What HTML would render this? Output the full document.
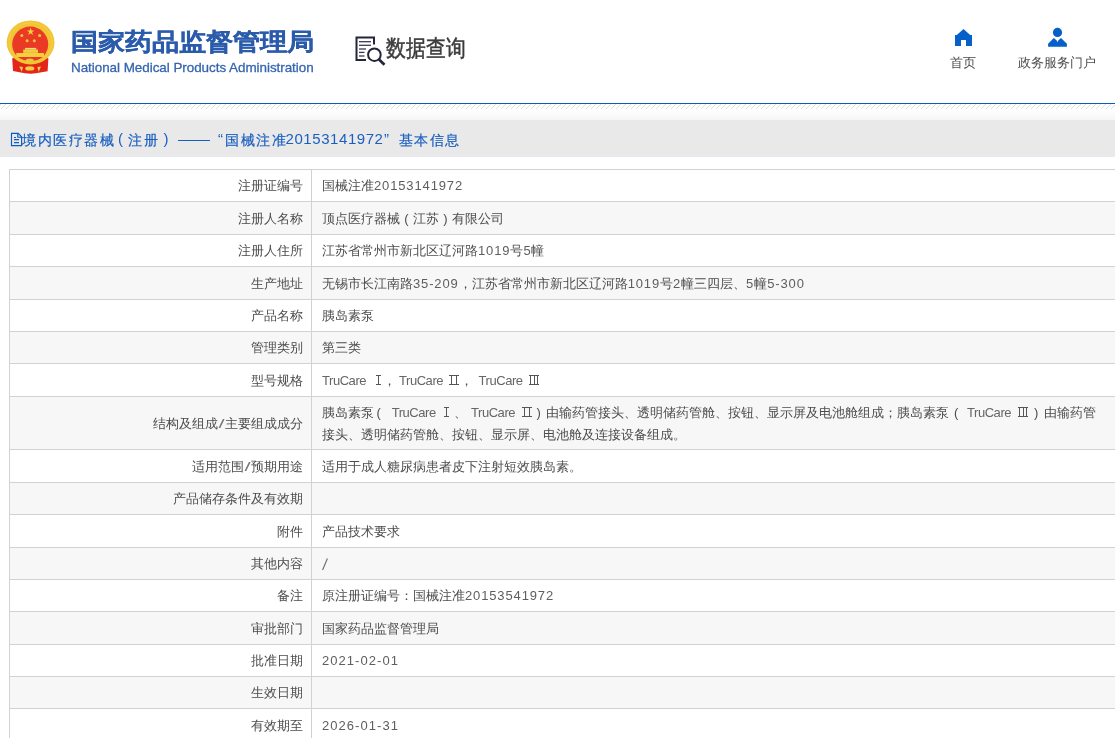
<!DOCTYPE html>
<html><head><meta charset="utf-8">
<style>
*{margin:0;padding:0;box-sizing:border-box}
html,body{width:1115px;height:738px;overflow:hidden;background:#fff}
body{font-family:"Liberation Sans",sans-serif;position:relative;color:#555;-webkit-font-smoothing:antialiased}
.abs{position:absolute;white-space:nowrap}
#hdr{position:absolute;left:0;top:0;width:1115px;height:103px;background:#fff}
#title{left:71px;top:22.8px;font-size:27px;font-weight:bold;color:#2b5bab;line-height:36px;transform:scaleY(0.885);transform-origin:0 30.5px;-webkit-text-stroke:0.35px #2b5bab}
#en{left:71px;top:60px;font-size:13.45px;color:#3565b0;line-height:16px;letter-spacing:-0.04px;-webkit-text-stroke:0.3px #3565b0}
#dq{left:386px;top:34px;font-size:20px;color:#3c3c3c;line-height:28px;transform:scaleY(1.16);transform-origin:0 14.5px;-webkit-text-stroke:0.45px #3c3c3c}
.nav{font-size:13px;color:#4c4c4c;line-height:16px}
#blue{position:absolute;left:0;top:103px;width:1115px;height:1px;background:#0a5cc2}
#hatch{position:absolute;left:0;top:104px;width:1115px;height:5px;
 }
#grad{position:absolute;left:0;top:109px;width:1115px;height:11px;background:linear-gradient(#fff,#f6f6f6)}
#band{position:absolute;left:0;top:120px;width:1115px;height:37px;background:#e9e9e9;border-bottom:1px solid #e7eaf2}
.bt{position:absolute;white-space:nowrap;top:130px;font-size:15px;color:#1a5fc0;line-height:18px}
.cj{font-size:14.1px;letter-spacing:1.6px;top:131.3px;-webkit-text-stroke:0.2px #1a5fc0}
.n15{letter-spacing:0.57px}
#tbl{position:absolute;left:9px;top:169px;border-collapse:collapse;width:1120px;table-layout:fixed}
#tbl td{border:1px solid #d3d1d1;font-size:13px;color:#4c4c4c;line-height:21.6px;vertical-align:middle}
#tbl td.k{width:302px;text-align:right;padding:1px 8px 0 0}
#tbl td.v{padding:1px 10px 0 10px}
#tbl tr{height:32.4px}
#tbl tr.tall{height:53.6px}
#tbl tr:nth-child(even) td{background:#f7f7f7}
.n{letter-spacing:0.86px;color:#5e5e5e}
.d{letter-spacing:1.05px}
.t{letter-spacing:-0.45px;color:#666}
</style><style>
.rel{position:relative;height:21.6px}
.ap{position:absolute;top:0;white-space:nowrap;line-height:21.6px}
.rn{position:absolute;fill:#56565a}
.r8 .ap{top:1px}
.pp{display:inline-block;width:13px;text-align:center;font-weight:normal}
.sl{display:inline-block;width:7px;text-align:center;transform:scaleX(1.7);color:#777}
.sl2{display:inline-block;width:6px;text-align:center;transform:translateY(1.5px) scale(1.45,1.2);color:#555}
</style></head><body><div id="root" style="position:absolute;left:0;top:0;width:1115px;height:738px;will-change:transform">
<div id="hdr">
 <svg class="abs" style="left:0;top:0" width="60" height="80" viewBox="0 0 60 80">
  <path d="M12.2 58.2 L20 57 L30.5 63 L41 57 L48.4 58.2 L47.6 71.2 L41.5 72.3 Q30.5 75 19.5 72.3 L13 71 Z" fill="#e3261b"/>
  <ellipse cx="30.6" cy="42.4" rx="23.9" ry="22" fill="#f1c534"/>
  <ellipse cx="30.6" cy="42.4" rx="21.5" ry="19.6" fill="none" stroke="#f5d55a" stroke-width="1" opacity="0.6"/>
  <ellipse cx="30.2" cy="44.2" rx="18" ry="17.6" fill="#ea3a26"/>
  <polygon points="30.6,27.6 31.6,30.4 34.5,30.4 32.1,32.1 33,34.9 30.6,33.2 28.2,34.9 29.1,32.1 26.7,30.4 29.6,30.4" fill="#f2cf3c"/>
  <circle cx="21.8" cy="35.5" r="1.5" fill="#eec73a"/>
  <circle cx="39.6" cy="35.5" r="1.5" fill="#eec73a"/>
  <circle cx="27.1" cy="40.8" r="1.5" fill="#eec73a"/>
  <circle cx="34.3" cy="40.8" r="1.5" fill="#eec73a"/>
  <rect x="25" y="47.9" width="11.2" height="1.8" fill="#f7dc6a"/>
  <rect x="23.2" y="49.6" width="14.8" height="3.3" fill="#f2cb42"/>
  <rect x="16.2" y="53" width="27.8" height="4" fill="#f4cf3e"/>
  <path d="M16 57.5 Q30.5 67 45 57.5" fill="none" stroke="#f1c534" stroke-width="2.2"/>
  <ellipse cx="29.8" cy="60.6" rx="4" ry="2" fill="#f0c63c"/>
  <ellipse cx="29.8" cy="68.4" rx="4.5" ry="2.2" fill="#f3cf40"/>
  <path d="M19.3 66.6 L23 67 L21.8 71.8 Z M41 66.6 L37.4 67 L38.7 71.8 Z" fill="#f3d040"/>
 </svg>
 <div id="title" class="abs">国家药品监督管理局</div>
 <div id="en" class="abs">National Medical Products Administration</div>
 <svg class="abs" style="left:354px;top:35px" width="34" height="32" viewBox="0 0 34 32">
  <path d="M20 9.5 V2.5 H2.5 V25 H12" fill="none" stroke="#24243a" stroke-width="2"/>
  <g stroke="#3a3a50" stroke-width="1.3">
   <line x1="5" y1="6.7" x2="17" y2="6.7"/>
   <line x1="5" y1="10.3" x2="17" y2="10.3"/>
   <line x1="5" y1="14" x2="12" y2="14"/>
   <line x1="5" y1="17.4" x2="10.5" y2="17.4"/>
   <line x1="5" y1="21" x2="10.5" y2="21"/>
  </g>
  <circle cx="20.4" cy="19.7" r="6.3" fill="none" stroke="#24243a" stroke-width="2"/>
  <line x1="25" y1="24.5" x2="30.5" y2="29.8" stroke="#24243a" stroke-width="2.8"/>
 </svg>
 <div id="dq" class="abs">数据查询</div>
 <svg class="abs" style="left:954px;top:28px" width="19" height="19" viewBox="0 0 19 19">
  <path d="M1 18 V6.9 H2.8 L9.5 0.9 L16.2 6.9 H18 V18 H12 V12 H7 V18 Z" fill="#0560c8"/>
 </svg>
 <div class="abs nav" style="left:950px;top:55px">首页</div>
 <svg class="abs" style="left:1047px;top:27px" width="21" height="21" viewBox="0 0 21 21">
  <circle cx="10.5" cy="5.4" r="4.6" fill="#0560c8"/>
  <path d="M1.1 19.8 V16.8 L6.8 11 L9.7 13.6 L10.5 15.2 L11.3 13.6 L14 11 L19.9 16.8 V19.8 Z" fill="#0560c8"/>
 </svg>
 <div class="abs nav" style="left:1018px;top:55px">政务服务门户</div>
</div>
<div id="blue"></div>
<svg id="hatch" width="1115" height="5" shape-rendering="crispEdges"><defs><pattern id="hp" x="1" width="5" height="5" patternUnits="userSpaceOnUse"><rect x="4" y="0" width="1" height="1" fill="#dedede"/><rect x="3" y="1" width="1" height="1" fill="#e0e0e0"/><rect x="2" y="2" width="1" height="1" fill="#e0e0e0"/><rect x="1" y="3" width="1" height="1" fill="#e0e0e0"/><rect x="0" y="4" width="1" height="1" fill="#e0e0e0"/></pattern></defs><rect width="1115" height="5" fill="#fff"/><rect width="1115" height="5" fill="url(#hp)"/></svg>
<div id="grad"></div>
<div id="band"></div>
<svg class="abs" style="left:0;top:120px" width="30" height="30" viewBox="0 120 30 30">
 <g fill="none" stroke="#0a5ac6" stroke-width="1.15">
 <path d="M11.5 133.4 H18.3 L21.6 136.8 V145.6 H11.5 Z"/>
 <path d="M17.8 133.4 V137.2 H21.6"/>
 <path d="M14 137.5 H16 M14 139.6 H19 M14 142.6 H19"/>
 </g>
</svg>
<div class="bt cj" style="left:22px">境内医疗器械</div>
<div class="bt" style="left:118px">(</div>
<div class="bt cj" style="left:128px">注册</div>
<div class="bt" style="left:163.5px">)</div>
<div class="abs" style="left:178px;top:140px;width:32px;height:1px;background:#1a5fc0"></div>
<div class="bt" style="left:218px">&#8220;</div>
<div class="bt cj" style="left:225px">国械注准</div>
<div class="bt n15" style="left:285.5px">20153141972</div>
<div class="bt" style="left:384px">&#8221;</div>
<div class="bt cj" style="left:398.5px">基本信息</div>

<table id="tbl">
<tr><td class="k">注册证编号</td><td class="v">国械注准<span class="n">20153141972</span></td></tr>
<tr><td class="k">注册人名称</td><td class="v">顶点医疗器械<b class="pp">(</b>江苏<b class="pp">)</b>有限公司</td></tr>
<tr><td class="k">注册人住所</td><td class="v">江苏省常州市新北区辽河路<span class="n">1019</span>号<span class="n">5</span>幢</td></tr>
<tr><td class="k">生产地址</td><td class="v">无锡市长江南路<span class="n">35-209</span>，江苏省常州市新北区辽河路<span class="n">1019</span>号<span class="n">2</span>幢三四层、<span class="n">5</span>幢<span class="n">5-300</span></td></tr>
<tr><td class="k">产品名称</td><td class="v">胰岛素泵</td></tr>
<tr><td class="k">管理类别</td><td class="v">第三类</td></tr>
<tr><td class="k">型号规格</td><td class="v"><div class="rel r7"><span class="ap t" style="left:0px">TruCare</span><svg class="rn" shape-rendering="crispEdges" style="left:54px;top:5.6px" width="5" height="10"><rect x="0" y="0" width="5" height="1"/><rect x="0" y="9" width="5" height="1"/><rect x="2" y="0" width="1" height="10"/></svg><span class="ap" style="left:61px">，</span><span class="ap t" style="left:77px">TruCare</span><svg class="rn" shape-rendering="crispEdges" style="left:127px;top:5.6px" width="10" height="10"><rect x="0" y="0" width="10" height="1"/><rect x="0" y="9" width="10" height="1"/><rect x="1.5" y="0" width="1" height="10"/><rect x="6.5" y="0" width="1" height="10"/></svg><span class="ap" style="left:137.5px">，</span><span class="ap t" style="left:156.6px">TruCare</span><svg class="rn" shape-rendering="crispEdges" style="left:207px;top:5.6px" width="10" height="10"><rect x="0" y="0" width="10" height="1"/><rect x="0" y="9" width="10" height="1"/><rect x="1" y="0" width="1" height="10"/><rect x="4.5" y="0" width="1" height="10"/><rect x="8" y="0" width="1" height="10"/></svg></div></td></tr>
<tr class="tall"><td class="k">结构及组成<span class="sl">/</span>主要组成成分</td><td class="v"><div class="rel r8" style="height:45px"><span class="ap" style="left:0px">胰岛素泵</span><span class="ap" style="left:54.5px">(</span><span class="ap t" style="left:69.7px">TruCare</span><svg class="rn" shape-rendering="crispEdges" style="left:122px;top:5.6px" width="5" height="10"><rect x="0" y="0" width="5" height="1"/><rect x="0" y="9" width="5" height="1"/><rect x="2" y="0" width="1" height="10"/></svg><span class="ap" style="left:131.5px">、</span><span class="ap t" style="left:149px">TruCare</span><svg class="rn" shape-rendering="crispEdges" style="left:200px;top:5.6px" width="10" height="10"><rect x="0" y="0" width="10" height="1"/><rect x="0" y="9" width="10" height="1"/><rect x="1.5" y="0" width="1" height="10"/><rect x="6.5" y="0" width="1" height="10"/></svg><span class="ap" style="left:214.5px">)</span><span class="ap" style="left:224.4px">由输药管接头、透明储药管舱、按钮、显示屏及电池舱组成；胰岛素泵</span><span class="ap" style="left:632px">(</span><span class="ap t" style="left:645px">TruCare</span><svg class="rn" shape-rendering="crispEdges" style="left:696px;top:5.6px" width="10" height="10"><rect x="0" y="0" width="10" height="1"/><rect x="0" y="9" width="10" height="1"/><rect x="1" y="0" width="1" height="10"/><rect x="4.5" y="0" width="1" height="10"/><rect x="8" y="0" width="1" height="10"/></svg><span class="ap" style="left:712px">)</span><span class="ap" style="left:721.7px">由输药管</span><span class="ap" style="left:0;top:23.2px">接头、透明储药管舱、按钮、显示屏、电池舱及连接设备组成。</span></div></td></tr>
<tr><td class="k">适用范围<span class="sl">/</span>预期用途</td><td class="v">适用于成人糖尿病患者皮下注射短效胰岛素。</td></tr>
<tr><td class="k">产品储存条件及有效期</td><td class="v"></td></tr>
<tr><td class="k">附件</td><td class="v">产品技术要求</td></tr>
<tr><td class="k">其他内容</td><td class="v"><div class="rel"><svg style="position:absolute;left:0;top:4px" width="8" height="14"><line x1="0.6" y1="13" x2="5.4" y2="1.5" stroke="#6a6a6a" stroke-width="1.1"/></svg></div></td></tr>
<tr><td class="k">备注</td><td class="v">原注册证编号：国械注准<span class="n">20153541972</span></td></tr>
<tr><td class="k">审批部门</td><td class="v">国家药品监督管理局</td></tr>
<tr><td class="k">批准日期</td><td class="v"><span class="n d">2021-02-01</span></td></tr>
<tr><td class="k">生效日期</td><td class="v"></td></tr>
<tr><td class="k">有效期至</td><td class="v"><span class="n d">2026-01-31</span></td></tr>
</table>
</div></body></html>
